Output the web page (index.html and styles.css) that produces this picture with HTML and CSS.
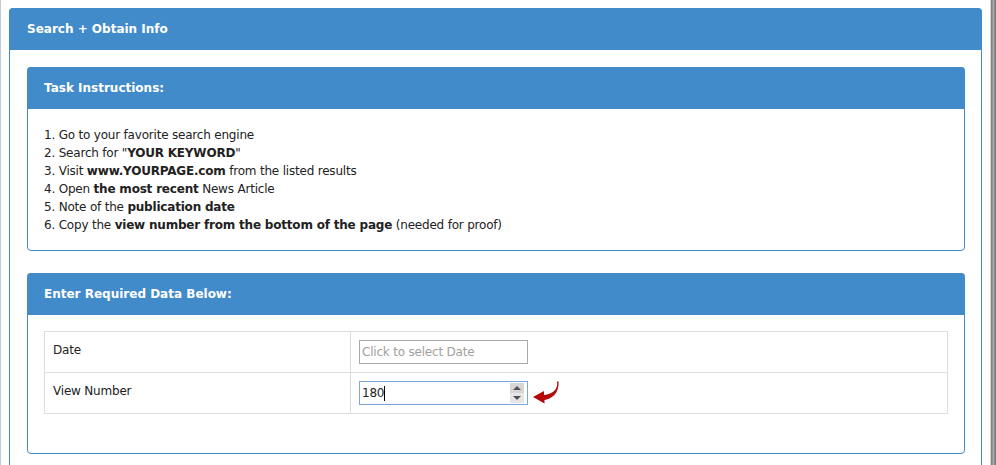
FILE: index.html
```html
<!DOCTYPE html>
<html lang="en">
<head>
    <meta charset="UTF-8">
    <title>Search + Obtain Info</title>
    <link rel="stylesheet" href="styles.css">
</head>
<body>
    <div class="frame-left"></div>
    <main class="page">
        <section class="panel outer">
            <div class="panel-heading">Search + Obtain Info</div>
            <div class="panel-body">
                <section class="panel">
                    <div class="panel-heading">Task Instructions:</div>
                    <div class="panel-body steps">
                        1. Go to your favorite search engine<br>
                        2. Search for "<b>YOUR KEYWORD</b>"<br>
                        3. Visit <b>www.YOURPAGE.com</b> from the listed results<br>
                        4. Open <b>the most recent</b> News Article<br>
                        5. Note of the <b>publication date</b><br>
                        6. Copy the <b>view number from the bottom of the page</b> (needed for proof)
                    </div>
                </section>
                <section class="panel">
                    <div class="panel-heading">Enter Required Data Below:</div>
                    <div class="panel-body data">
                        <table class="fields">
                            <tr>
                                <td class="label-cell">Date</td>
                                <td><input type="text" class="field" placeholder="Click to select Date"></td>
                            </tr>
                            <tr>
                                <td class="label-cell">View Number</td>
                                <td>
                                    <div class="field-row">
                                        <span class="field number">
                                            <span class="value">180</span><span class="caret"></span>
                                            <span class="spin">
                                                <span class="spin-up"></span>
                                                <span class="spin-down"></span>
                                            </span>
                                        </span>
                                        <svg class="arrow" width="28" height="24" viewBox="0 0 28 24">
                                            <path d="M25 0.5 C26.5 8 21 13 12 14 L12 10 L1 16 L12.5 22.5 L12.5 19 C21 18 27.5 10.5 26.5 0.5 Z" fill="#b50808"/>
                                        </svg>
                                    </div>
                                </td>
                            </tr>
                        </table>
                    </div>
                </section>
            </div>
        </section>
    </main>
    <div class="frame-right"></div>
</body>
</html>
```

FILE: styles.css
```css
html, body {
    height: 100%;
}
body {
    margin: 0;
    display: flex;
    background: #fff;
    font-family: "DejaVu Sans", Verdana, sans-serif;
    font-size: 12px;
    letter-spacing: -0.2px;
    color: #222;
    overflow: hidden;
}
.frame-left {
    width: 1px;
    background: #c3c9d4;
}
.frame-right {
    width: 5px;
    border-left: 1px solid #d4d4d4;
    background: linear-gradient(to right, #7a7a7a, #a9a9a9 50%, #6f6f6f);
}
.page {
    flex: 1;
    padding: 8px 8px 0 8px;
}
.panel {
    border: 1px solid #428bca;
    border-radius: 4px;
    background: #fff;
}
.panel + .panel {
    margin-top: 22px;
}
.panel-heading {
    background: #428bca;
    color: #fff;
    font-weight: bold;
    font-size: 12px;
    letter-spacing: 0;
    line-height: 16px;
    padding: 13px 17px 13px 17px;
    margin: -1px -1px 0 -1px;
    border-radius: 4px 4px 0 0;
}
.outer > .panel-heading {
    padding-left: 18px;
}
.outer > .panel-body {
    padding: 17px 16px 17px 17px;
    min-height: 500px;
}
.steps {
    padding: 17px 16px 16px 16px;
    line-height: 18px;
}
.data {
    padding: 16px 16px 39px 16px;
}
.fields {
    width: 100%;
    border-collapse: collapse;
}
.fields td {
    border: 1px solid #ddd;
    padding: 8px;
    line-height: 20px;
    vertical-align: top;
}
.label-cell {
    width: 289px;
}
.field {
    box-sizing: border-box;
    width: 169px;
    height: 24px;
    border: 1px solid #a9a9a9;
    padding: 0 2px;
    font-family: "DejaVu Sans", Verdana, sans-serif;
    font-size: 12px;
    letter-spacing: -0.2px;
    color: #222;
    outline: none;
    display: block;
}
.field::placeholder {
    color: #a0a0a0;
}
.field-row {
    display: flex;
    align-items: center;
    gap: 4px;
    height: 24px;
}
.number {
    display: flex;
    align-items: center;
    border-color: #7ea6d9;
    padding-left: 2px;
}
.caret {
    width: 1px;
    height: 15px;
    background: #000;
}
.spin {
    margin-left: auto;
    margin-right: 1px;
    width: 14px;
    height: 20px;
    display: flex;
    flex-direction: column;
}
.spin-up, .spin-down {
    flex: 1;
    position: relative;
}
.spin-up {
    background: #d6d6d6;
}
.spin-down {
    background: #e6e6e6;
}
.spin-up::after, .spin-down::after {
    content: "";
    position: absolute;
    left: 3px;
    border-left: 4px solid transparent;
    border-right: 4px solid transparent;
}
.spin-up::after {
    top: 3px;
    border-bottom: 4px solid #505050;
}
.spin-down::after {
    top: 3px;
    border-top: 4px solid #505050;
}
.arrow {
    display: block;
}
```
